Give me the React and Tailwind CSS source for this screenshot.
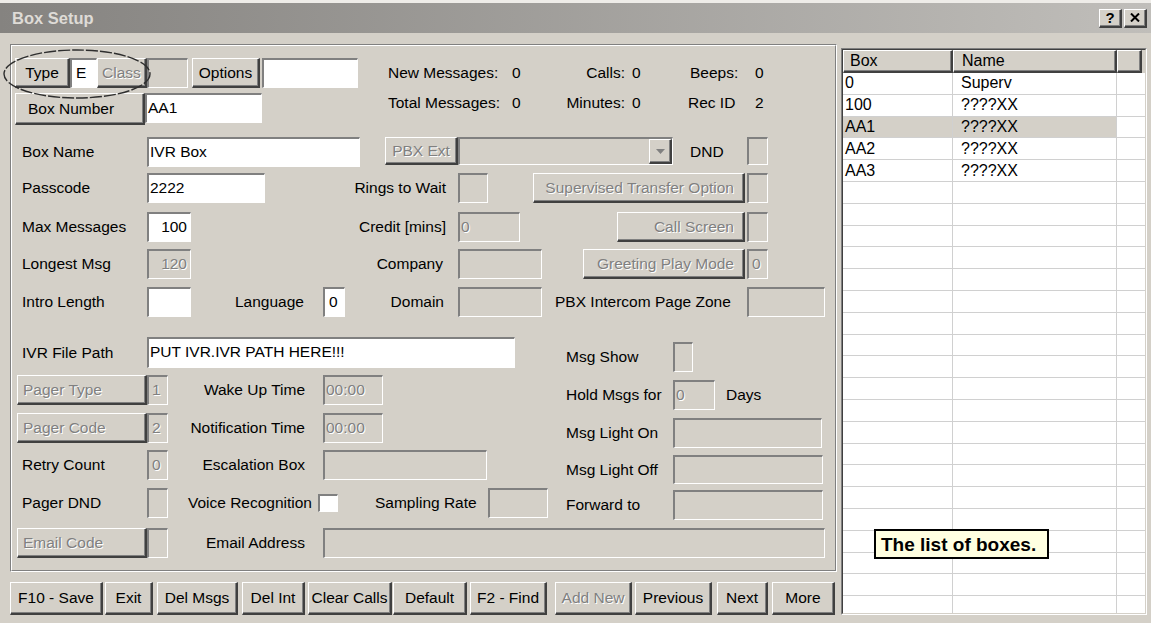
const raised =
  "bg-[#d4d0c8] border-t border-l border-b-2 border-r-2 border-t-white border-l-white border-b-[#404040] border-r-[#404040] shadow-[inset_-1px_-1px_0_#808080]";
const sunken =
  "border-t-2 border-l-2 border-b border-r border-t-[#808080] border-l-[#808080] border-b-white border-r-white";
const dimText = "text-[#808080] [text-shadow:1px_1px_0_#ffffff]";

function Btn({ className = "", disabled, align = "center", children }) {
  const place =
    align === "right"
      ? "justify-end pr-[9px]"
      : align === "left"
        ? "justify-start"
        : "justify-center";
  return (
    <div
      className={`${raised} flex items-center shrink-0 ${place} ${disabled ? dimText : "text-black"} ${className}`}
    >
      {children}
    </div>
  );
}

function Field({ className = "", white, right, dim, children }) {
  return (
    <div
      className={`${sunken} ${white ? "bg-white" : "bg-[#d4d0c8]"} flex items-center shrink-0 pb-[2px] ${right ? "justify-end pr-[3px]" : "pl-[1px]"} ${dim ? dimText : "text-black"} ${className}`}
    >
      {children}
    </div>
  );
}

function Label({ children }) {
  return <div className="w-[135px] pl-[10px] shrink-0">{children}</div>;
}

function Combo() {
  return (
    <div className={`${sunken} bg-[#d4d0c8] flex justify-end shrink-0 w-[215px] h-[28px]`}>
      <Btn className="w-[23px] h-full">
        <svg width="9" height="5" viewBox="0 0 9 5">
          <path d="M0 0h9L4.5 5z" fill="#808080" />
        </svg>
      </Btn>
    </div>
  );
}

const boxes = [
  ["0", "Superv"],
  ["100", "????XX"],
  ["AA1", "????XX"],
  ["AA2", "????XX"],
  ["AA3", "????XX"],
];

function BoxList() {
  const rows = [];
  for (let i = 0; i < 25; i++) rows.push(boxes[i] || ["", ""]);
  return (
    <div className="ml-[4px] mt-[15px] w-[306px] h-[567px] shrink-0 border border-t-[#808080] border-l-[#808080] border-b-white border-r-white">
      <div className="h-full bg-white overflow-hidden border border-t-[#404040] border-l-[#404040] border-b-[#d4d0c8] border-r-[#d4d0c8] text-[16px]">
        <div className="flex h-[23px]">
          <Btn align="left" className="w-[110px] h-full pl-[6px]">Box</Btn>
          <Btn align="left" className="w-[164px] h-full pl-[8px]">Name</Btn>
          <Btn className="w-[25px] h-full" />
          <div className="flex-1 bg-[#d4d0c8]" />
        </div>
        {rows.map(([box, name], i) => (
          <div key={i} className="flex h-[21.8px] border-b border-b-[#d0d0d0]">
            <div
              className={`w-[110px] pl-[2px] flex items-center border-r border-r-[#d0d0d0] ${box === "AA1" ? "bg-[#d4d0c8]" : ""}`}
            >
              {box}
            </div>
            <div
              className={`w-[164px] pl-[8px] flex items-center border-r border-r-[#d0d0d0] ${box === "AA1" ? "bg-[#d4d0c8]" : ""}`}
            >
              {name}
            </div>
            <div className="flex-1" />
          </div>
        ))}
      </div>
    </div>
  );
}

export default function App() {
  return (
    <div className="font-['Liberation_Sans',Arial,sans-serif] w-[1151px] h-[623px] bg-[#d4d0c8] overflow-hidden relative text-[15.5px] leading-none text-black border-t-[3px] border-t-[#eeece8]">
      {/* title bar */}
      <div className="h-[30px] bg-linear-to-r from-[#858380] to-[#c0beba] flex items-center pl-[12px] pr-[4px]">
        <span className="font-bold text-[16.5px] text-[#dedbd6]">Box Setup</span>
        <div className="ml-auto flex gap-[2px]">
          <Btn className="w-[23px] h-[19px] font-bold text-[15px]">?</Btn>
          <Btn className="w-[23px] h-[19px]">
            <svg width="10" height="9" viewBox="0 0 10 9">
              <path d="M1 0.5l8 8M9 0.5l-8 8" stroke="#000" strokeWidth="2" />
            </svg>
          </Btn>
        </div>
      </div>

      <div className="flex">
        <div className="w-[837px] shrink-0">
          {/* settings group */}
          <div className="ml-[10px] mt-[11px] w-[827px] h-[528px] border border-t-[#808080] border-l-[#808080] border-b-white border-r-white">
            <div className="h-full border border-t-white border-l-white border-b-[#808080] border-r-[#808080]">
              {/* type / box number + counters */}
              <div className="flex mt-[12px]">
                <div>
                  <div className="flex h-[30px]">
                    <Btn className="ml-[3px] w-[55px] h-full">Type</Btn>
                    <Field white className="w-[27px] h-full items-start pt-[5px] pl-[4px]">E</Field>
                    <Btn disabled className="w-[50px] h-full">Class</Btn>
                    <Field className="w-[41px] h-full" />
                    <Btn className="ml-[4px] w-[68px] h-full">Options</Btn>
                    <Field white className="ml-[2px] w-[96px] h-full" />
                  </div>
                  <div className="flex mt-[5px] items-start">
                    <Btn align="left" className="ml-[3px] w-[130px] h-[32px] pl-[12px]">Box Number</Btn>
                    <Field white className="w-[117px] h-[30px]">AA1</Field>
                  </div>
                </div>
                <div className="ml-[30px]">
                  <div className="flex items-center h-[30px]">
                    <span className="w-[124px]">New Messages:</span>
                    <span className="w-[40px]">0</span>
                    <span className="w-[73px] text-right">Calls:</span>
                    <span className="w-[63px] pl-[7px]">0</span>
                    <span className="w-[67px] pl-[2px]">Beeps:</span>
                    <span>0</span>
                  </div>
                  <div className="flex items-center h-[30px]">
                    <span className="w-[124px]">Total Messages:</span>
                    <span className="w-[40px]">0</span>
                    <span className="w-[73px] text-right">Minutes:</span>
                    <span className="w-[63px] pl-[7px]">0</span>
                    <span className="w-[67px]">Rec ID</span>
                    <span>2</span>
                  </div>
                </div>
              </div>

              <div className="flex items-center h-[30px] mt-[12px]">
                <Label>Box Name</Label>
                <Field white className="w-[213px] h-full">IVR Box</Field>
                <Btn disabled className="ml-[25px] w-[73px] h-[28px] self-start">PBX Ext</Btn>
                <div className="self-start">
                  <Combo />
                </div>
                <div className="ml-[17px] w-[57px]">DND</div>
                <Field className="w-[21px] h-[28px] self-start" />
              </div>

              <div className="flex items-center h-[30px] mt-[6px]">
                <Label>Passcode</Label>
                <Field white className="w-[118px] h-full">2222</Field>
                <div className="w-[181px] text-right">Rings to Wait</div>
                <Field className="ml-[12px] w-[30px] h-full" />
                <Btn disabled align="right" className="ml-[45px] w-[212px] h-full">
                  Supervised Transfer Option
                </Btn>
                <Field className="ml-[2px] w-[21px] h-full" />
              </div>

              <div className="flex items-center h-[30px] mt-[9px]">
                <Label>Max Messages</Label>
                <Field white right className="w-[44px] h-full">100</Field>
                <div className="w-[255px] text-right">Credit [mins]</div>
                <Field dim className="ml-[12px] w-[62px] h-full">0</Field>
                <Btn disabled align="right" className="ml-[97px] w-[128px] h-full">Call Screen</Btn>
                <Field className="ml-[2px] w-[21px] h-full" />
              </div>

              <div className="flex items-center h-[30px] mt-[7px]">
                <Label>Longest Msg</Label>
                <Field dim right className="w-[44px] h-full">120</Field>
                <div className="w-[252px] text-right">Company</div>
                <Field className="ml-[15px] w-[84px] h-full" />
                <Btn disabled align="right" className="ml-[41px] w-[162px] h-full">
                  Greeting Play Mode
                </Btn>
                <Field dim className="ml-[2px] w-[21px] h-full pl-[3px]">0</Field>
              </div>

              <div className="flex items-center h-[30px] mt-[8px]">
                <Label>Intro Length</Label>
                <Field white className="w-[44px] h-full" />
                <div className="ml-[44px] w-[88px]">Language</div>
                <Field white className="w-[22px] h-full pl-[4px]">0</Field>
                <div className="w-[99px] text-right">Domain</div>
                <Field className="ml-[14px] w-[84px] h-full" />
                <div className="ml-[13px] w-[192px]">PBX Intercom Page Zone</div>
                <Field className="w-[78px] h-full" />
              </div>

              {/* pager + message light section */}
              <div className="flex mt-[20px]">
                <div className="w-[554px] shrink-0">
                  <div className="flex items-center h-[31px]">
                    <Label>IVR File Path</Label>
                    <Field white className="w-[368px] h-full">PUT IVR.IVR PATH HERE!!!</Field>
                  </div>
                  <div className="flex items-center h-[30px] mt-[7px]">
                    <Btn disabled align="left" className="ml-[5px] w-[130px] h-full pl-[5px]">Pager Type</Btn>
                    <Field dim className="w-[21px] h-full pl-[3px]">1</Field>
                    <div className="w-[137px] text-right">Wake Up Time</div>
                    <Field dim className="ml-[18px] w-[60px] h-full">00:00</Field>
                  </div>
                  <div className="flex items-center h-[30px] mt-[8px]">
                    <Btn disabled align="left" className="ml-[5px] w-[130px] h-full pl-[5px]">Pager Code</Btn>
                    <Field dim className="w-[21px] h-full pl-[3px]">2</Field>
                    <div className="w-[137px] text-right">Notification Time</div>
                    <Field dim className="ml-[18px] w-[60px] h-full">00:00</Field>
                  </div>
                  <div className="flex items-center h-[30px] mt-[7px]">
                    <Label>Retry Count</Label>
                    <Field dim className="w-[21px] h-full pl-[3px]">0</Field>
                    <div className="w-[137px] text-right">Escalation Box</div>
                    <Field className="ml-[18px] w-[164px] h-full" />
                  </div>
                  <div className="flex items-center h-[30px] mt-[8px]">
                    <Label>Pager DND</Label>
                    <Field className="w-[21px] h-full" />
                    <div className="w-[144px] text-right">Voice Recognition</div>
                    <div className={`${sunken} bg-white ml-[6px] w-[20px] h-[18px]`} />
                    <div className="ml-[37px] w-[113px]">Sampling Rate</div>
                    <Field className="w-[60px] h-full" />
                  </div>
                </div>
                <div>
                  <div className="flex items-center h-[30px] mt-[5px]">
                    <div className="w-[107px]">Msg Show</div>
                    <Field className="w-[20px] h-full" />
                  </div>
                  <div className="flex items-center h-[30px] mt-[8px]">
                    <div className="w-[107px]">Hold Msgs for</div>
                    <Field dim className="w-[42px] h-full">0</Field>
                    <span className="ml-[11px]">Days</span>
                  </div>
                  <div className="flex items-center h-[30px] mt-[8px]">
                    <div className="w-[107px]">Msg Light On</div>
                    <Field className="w-[149px] h-full" />
                  </div>
                  <div className="flex items-center h-[29px] mt-[7px]">
                    <div className="w-[107px]">Msg Light Off</div>
                    <Field className="w-[150px] h-full" />
                  </div>
                  <div className="flex items-center h-[30px] mt-[6px]">
                    <div className="w-[107px]">Forward to</div>
                    <Field className="w-[150px] h-full" />
                  </div>
                </div>
              </div>

              <div className="flex items-center h-[30px] mt-[8px]">
                <Btn disabled align="left" className="ml-[5px] w-[130px] h-full pl-[5px]">Email Code</Btn>
                <Field className="w-[21px] h-full" />
                <div className="w-[137px] text-right">Email Address</div>
                <Field className="ml-[18px] w-[502px] h-full" />
              </div>
            </div>
          </div>

          {/* command buttons */}
          <div className="flex h-[33px] mt-[10px]">
            <Btn className="ml-[10px] w-[93px]">F10 - Save</Btn>
            <Btn className="ml-[2px] w-[48px]">Exit</Btn>
            <Btn className="ml-[4px] w-[81px]">Del Msgs</Btn>
            <Btn className="ml-[4px] w-[63px]">Del Int</Btn>
            <Btn className="ml-[3px] w-[84px]">Clear Calls</Btn>
            <Btn className="ml-[1px] w-[74px]">Default</Btn>
            <Btn className="ml-[3px] w-[77px]">F2 - Find</Btn>
            <Btn disabled className="ml-[8px] w-[77px]">Add New</Btn>
            <Btn className="ml-[3px] w-[77px]">Previous</Btn>
            <Btn className="ml-[5px] w-[51px]">Next</Btn>
            <Btn className="ml-[4px] w-[63px]">More</Btn>
          </div>
        </div>

        <BoxList />
      </div>

      {/* ring around the type controls */}
      <svg className="absolute left-[2px] top-[45px] pointer-events-none" width="150" height="52" viewBox="0 0 150 52">
        <ellipse cx="75" cy="26" rx="73" ry="24" fill="none" stroke="#2e2e2e" strokeWidth="1.4" strokeDasharray="12 2" />
      </svg>

      {/* tooltip over the list */}
      <div className="absolute left-[874px] top-[526px] w-[175px] h-[30px] border-2 border-black bg-[#ffffe1] font-bold text-[19px] flex items-center pl-[5px]">
        The list of boxes.
      </div>
    </div>
  );
}
